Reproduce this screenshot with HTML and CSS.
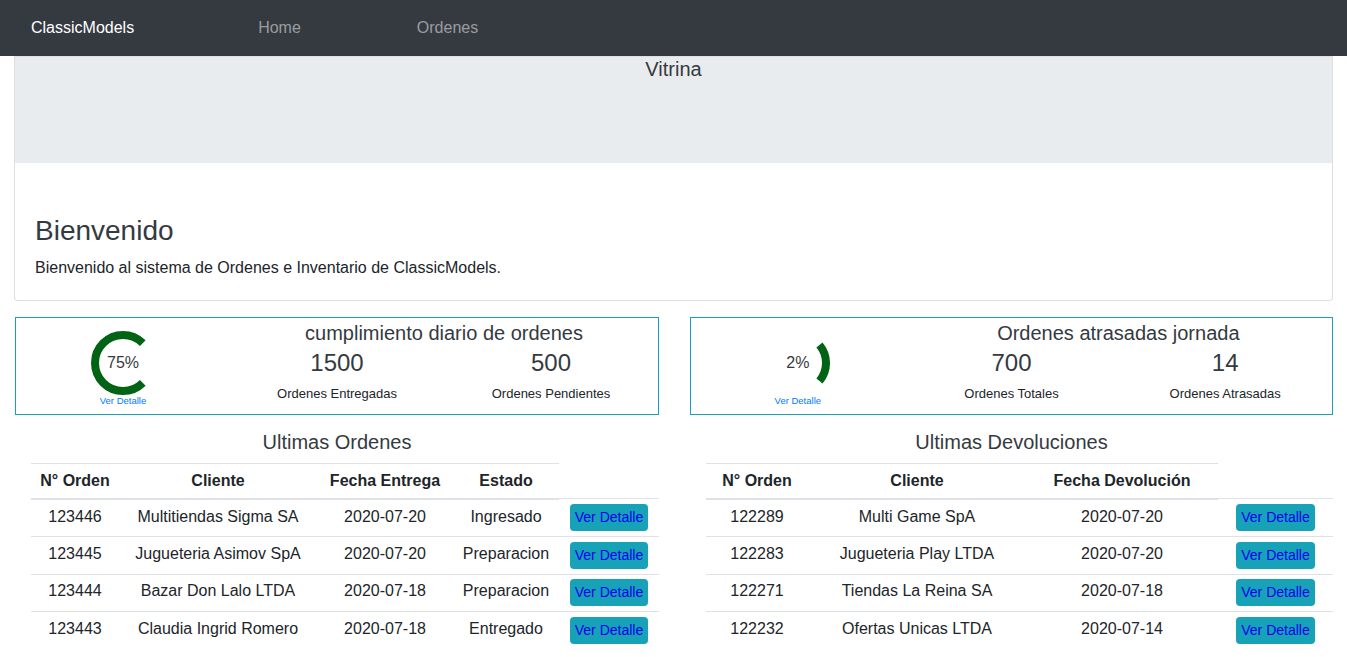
FILE: index.html
```html
<!DOCTYPE html>
<html lang="es">
<head>
<meta charset="utf-8">
<title>ClassicModels</title>
<link rel="stylesheet" href="styles.css">
</head>
<body>
<nav class="navbar">
  <a class="brand" href="#">ClassicModels</a>
  <a class="nav-link" href="#">Home</a>
  <a class="nav-link" href="#">Ordenes</a>
</nav>
<main class="page">
  <section class="card">
    <div class="showcase">Vitrina</div>
    <div class="card-body">
      <h3 class="welcome-title">Bienvenido</h3>
      <p class="welcome-text">Bienvenido al sistema de Ordenes e Inventario de ClassicModels.</p>
    </div>
  </section>

  <div class="dash-grid">
    <div class="stat-box">
      <div class="gauge-col">
        <div class="gauge">
          <svg class="gauge-svg" width="64" height="64" viewBox="0 0 64 64"><path d="M51.8 12.2 A28 28 0 1 0 51.8 51.8" fill="none" stroke="#006414" stroke-width="8"/></svg>
          <span class="gauge-label">75%</span>
        </div>
        <a class="gauge-link" href="#">Ver Detalle</a>
      </div>
      <div class="stat-main">
        <h5 class="stat-title">cumplimiento diario de ordenes</h5>
        <div class="stat-pair">
          <div class="stat"><div class="stat-num">1500</div><div class="stat-label">Ordenes Entregadas</div></div>
          <div class="stat"><div class="stat-num">500</div><div class="stat-label">Ordenes Pendientes</div></div>
        </div>
      </div>
    </div>

    <div class="stat-box">
      <div class="gauge-col">
        <div class="gauge">
          <svg class="gauge-svg" width="64" height="64" viewBox="0 0 64 64"><path d="M53.45 14 A28 28 0 0 1 53.45 50" fill="none" stroke="#006414" stroke-width="8"/></svg>
          <span class="gauge-label">2%</span>
        </div>
        <a class="gauge-link" href="#">Ver Detalle</a>
      </div>
      <div class="stat-main">
        <h5 class="stat-title">Ordenes atrasadas jornada</h5>
        <div class="stat-pair">
          <div class="stat"><div class="stat-num">700</div><div class="stat-label">Ordenes Totales</div></div>
          <div class="stat"><div class="stat-num">14</div><div class="stat-label">Ordenes Atrasadas</div></div>
        </div>
      </div>
    </div>

    <div class="table-col">
      <h5 class="table-title">Ultimas Ordenes</h5>
      <table class="data-table">
        <colgroup>
          <col class="w-88"><col class="w-198"><col class="w-136"><col class="w-106"><col>
        </colgroup>
        <thead>
          <tr><th>N° Orden</th><th>Cliente</th><th>Fecha Entrega</th><th>Estado</th></tr>
        </thead>
        <tbody>
          <tr><td>123446</td><td>Multitiendas Sigma SA</td><td>2020-07-20</td><td>Ingresado</td><td><a class="btn-detail" href="#">Ver Detalle</a></td></tr>
          <tr><td>123445</td><td>Jugueteria Asimov SpA</td><td>2020-07-20</td><td>Preparacion</td><td><a class="btn-detail" href="#">Ver Detalle</a></td></tr>
          <tr><td>123444</td><td>Bazar Don Lalo LTDA</td><td>2020-07-18</td><td>Preparacion</td><td><a class="btn-detail" href="#">Ver Detalle</a></td></tr>
          <tr><td>123443</td><td>Claudia Ingrid Romero</td><td>2020-07-18</td><td>Entregado</td><td><a class="btn-detail" href="#">Ver Detalle</a></td></tr>
        </tbody>
      </table>
    </div>

    <div class="table-col">
      <h5 class="table-title">Ultimas Devoluciones</h5>
      <table class="data-table">
        <colgroup>
          <col class="w-102"><col class="w-218"><col class="w-192"><col>
        </colgroup>
        <thead>
          <tr><th>N° Orden</th><th>Cliente</th><th>Fecha Devolución</th></tr>
        </thead>
        <tbody>
          <tr><td>122289</td><td>Multi Game SpA</td><td>2020-07-20</td><td><a class="btn-detail" href="#">Ver Detalle</a></td></tr>
          <tr><td>122283</td><td>Jugueteria Play LTDA</td><td>2020-07-20</td><td><a class="btn-detail" href="#">Ver Detalle</a></td></tr>
          <tr><td>122271</td><td>Tiendas La Reina SA</td><td>2020-07-18</td><td><a class="btn-detail" href="#">Ver Detalle</a></td></tr>
          <tr><td>122232</td><td>Ofertas Unicas LTDA</td><td>2020-07-14</td><td><a class="btn-detail" href="#">Ver Detalle</a></td></tr>
        </tbody>
      </table>
    </div>
  </div>
</main>
</body>
</html>
```

FILE: styles.css
```css
* { box-sizing: border-box; }

body {
  margin: 0;
  font-family: "Liberation Sans", Arial, sans-serif;
  font-size: 16px;
  line-height: 1.5;
  color: #212529;
  background: #fff;
}

.navbar {
  display: flex;
  align-items: center;
  height: 56px;
  padding-left: 31px;
  background: #343a40;
}
.brand {
  color: #fff;
  text-decoration: none;
  font-size: 16px;
  line-height: 24px;
  margin-right: 66px;
}
.nav-link {
  color: rgba(255, 255, 255, 0.5);
  text-decoration: none;
  line-height: 24px;
  padding: 0 58px;
}

.page {
  padding: 0 14px;
}

.card {
  border: 1px solid rgba(0, 0, 0, 0.125);
  border-radius: 0 0 4px 4px;
  background: #fff;
}
.showcase {
  height: 106px;
  background: #e9ecef;
  text-align: center;
  font-size: 20px;
  line-height: 24px;
  color: #343a40;
}
.card-body {
  padding: 51px 20px 20px;
}
.welcome-title {
  margin: 0 0 8px;
  font-size: 28px;
  line-height: 1.2;
  font-weight: 500;
  color: #343a40;
}
.welcome-text {
  margin: 0;
  font-size: 16px;
  line-height: 24px;
}

.dash-grid {
  display: grid;
  grid-template-columns: 644fr 643fr;
  column-gap: 31px;
  margin: 16px 0 0 1px;
}

.stat-box {
  display: grid;
  grid-template-columns: 1fr 2fr;
  border: 1px solid #17a2b8;
}
.gauge-col {
  display: flex;
  flex-direction: column;
  align-items: center;
  padding-top: 13px;
}
.gauge {
  display: grid;
  place-items: center;
  width: 64px;
  height: 64px;
}
.gauge-svg,
.gauge-label {
  grid-area: 1 / 1;
}
.gauge-svg { display: block; }
.gauge-label {
  font-size: 16px;
  line-height: 20px;
  color: #343a40;
}
.gauge-link {
  font-size: 9.5px;
  line-height: 11px;
  color: #007bff;
  text-decoration: none;
}

.stat-main {
  text-align: center;
  padding: 3px 0 11px;
}
.stat-title {
  margin: 0;
  font-size: 20px;
  line-height: 24px;
  font-weight: 500;
  color: #343a40;
}
.stat-pair {
  display: grid;
  grid-template-columns: 1fr 1fr;
}
.stat-num {
  margin-top: 4px;
  font-size: 24px;
  line-height: 28.8px;
  color: #343a40;
}
.stat-label {
  margin-top: 7px;
  font-size: 13px;
  line-height: 19px;
}

.table-col {
  margin-top: 15px;
}
.table-title {
  margin: 0 0 9px;
  text-align: center;
  font-size: 20px;
  line-height: 24px;
  font-weight: 500;
  color: #343a40;
}
.data-table {
  width: calc(100% - 16px);
  margin-left: 16px;
  border-collapse: collapse;
  table-layout: fixed;
}
.w-88 { width: 88px; }
.w-198 { width: 198px; }
.w-136 { width: 136px; }
.w-106 { width: 106px; }
.w-102 { width: 102px; }
.w-218 { width: 218px; }
.w-192 { width: 192px; }

.data-table th,
.data-table td {
  padding: 4.8px;
  text-align: center;
  vertical-align: top;
  font-size: 16px;
  line-height: 24px;
  white-space: nowrap;
}
.data-table th {
  font-weight: bold;
  border-top: 1px solid #dee2e6;
  border-bottom: 2px solid #dee2e6;
}
.data-table td {
  border-top: 1px solid #dee2e6;
}

.btn-detail {
  display: inline-block;
  vertical-align: top;
  padding: 3px 5px;
  font-size: 14px;
  line-height: 21px;
  color: #0000ee;
  background: #17a2b8;
  border-radius: 4px;
  text-decoration: none;
}
```
